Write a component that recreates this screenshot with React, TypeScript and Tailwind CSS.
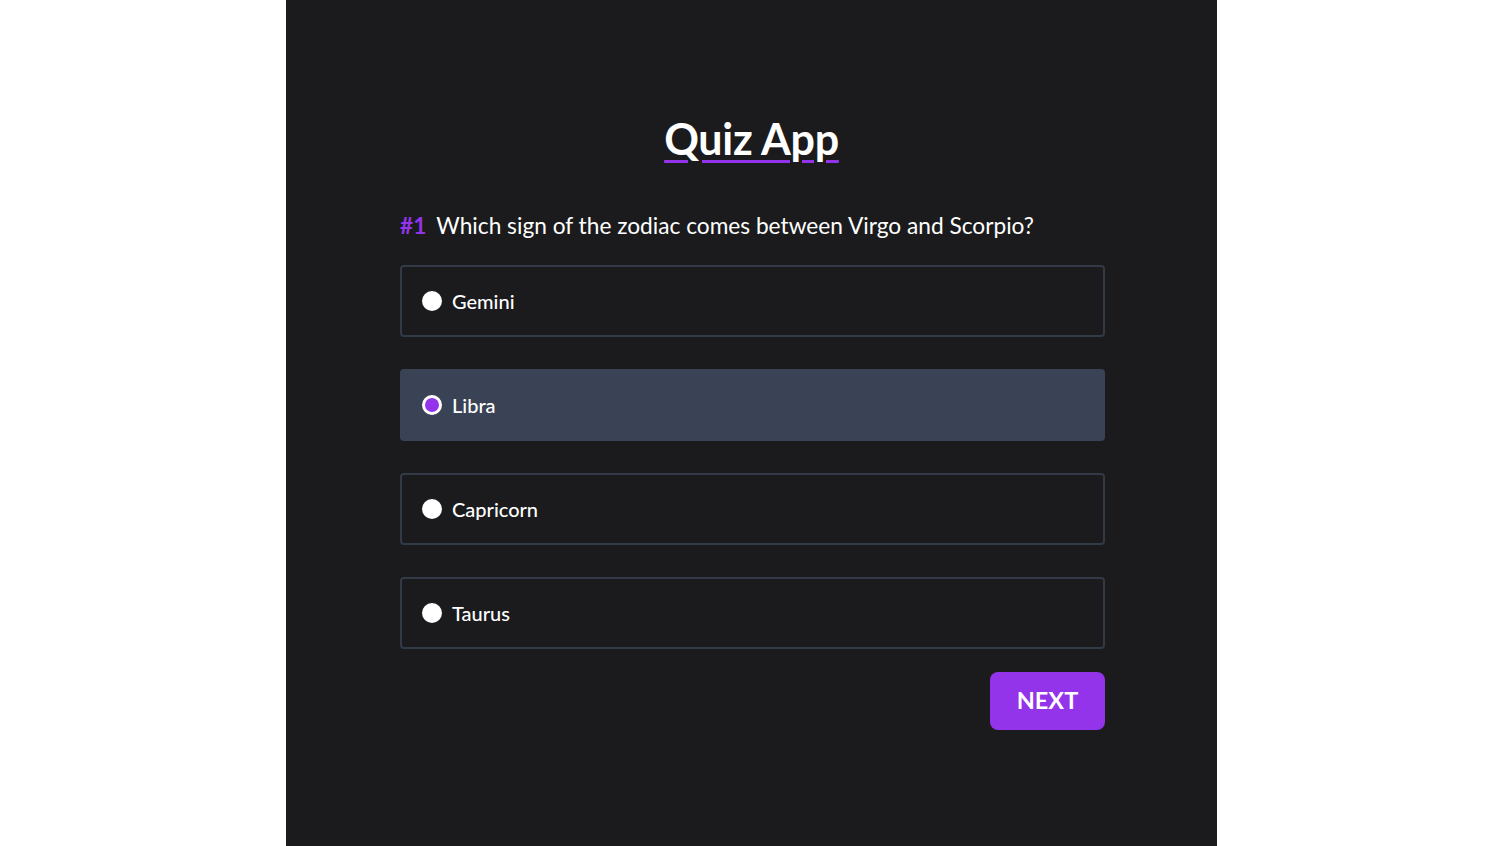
import React, { useState } from "react";

const options = ["Gemini", "Libra", "Capricorn", "Taurus"];

const App = () => {
  const [selected, setSelected] = useState(1);

  return (
    <div className="min-h-screen w-full bg-white font-['Lato',sans-serif]">
      <div className="ml-[286px] min-h-[846px] w-[931px] bg-[#1b1b1d] pt-[111px]">
        <h1 className="text-center text-[43px] leading-[56px] font-bold tracking-[-0.3px] text-white underline decoration-[#9333ea] decoration-[3px] underline-offset-[5px]">
          Quiz App
        </h1>

        <div className="ml-[114px] mt-[43px] w-[705px]">
          <p className="flex items-baseline text-[22.7px] leading-[32px] text-white">
            <span className="mr-[10px] font-bold text-[#9333ea]">#1</span>
            Which sign of the zodiac comes between Virgo and Scorpio?
          </p>

          <div className="mt-[23px] flex flex-col gap-[32px]">
            {options.map((opt, i) => {
              const active = selected === i;
              return (
                <label
                  key={opt}
                  onClick={() => setSelected(i)}
                  className={
                    active
                      ? "flex h-[72px] cursor-pointer items-center rounded-[4px] border-2 border-[#3a4255] bg-[#3a4255] px-[20px]"
                      : "flex h-[72px] cursor-pointer items-center rounded-[4px] border-2 border-[#333a47] bg-[#1b1b1d] px-[20px]"
                  }
                >
                  <span
                    className={
                      active
                        ? "h-[20px] w-[20px] rounded-full border-[3px] border-white bg-[#9333ea]"
                        : "h-[20px] w-[20px] rounded-full bg-white"
                    }
                  />
                  <span className="ml-[10px] text-[20px] font-medium text-white">{opt}</span>
                </label>
              );
            })}
          </div>

          <div className="mt-[23px] flex justify-end">
            <button className="h-[58px] w-[115px] rounded-[8px] bg-[#9333ea] text-[23.5px] font-bold text-white">
              NEXT
            </button>
          </div>
        </div>
      </div>
    </div>
  );
};

export default App;
